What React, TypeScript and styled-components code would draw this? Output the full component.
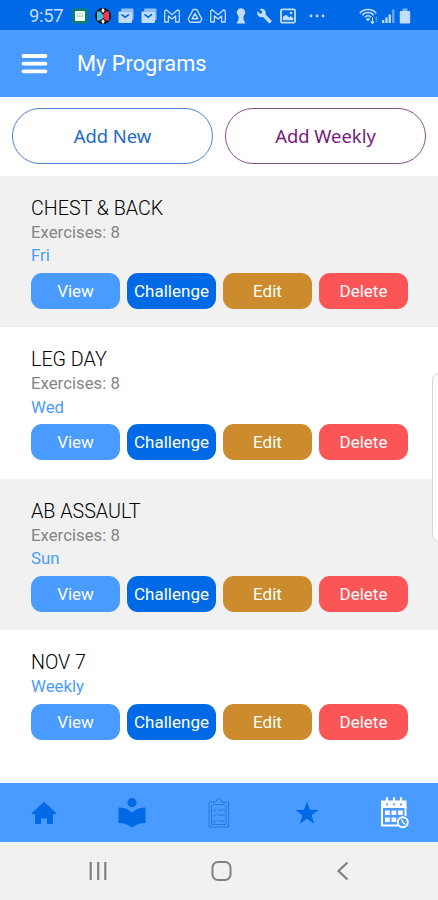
import React from 'react';
import styled, { createGlobalStyle } from 'styled-components';

const GlobalStyle = createGlobalStyle`
  *, *::before, *::after { box-sizing: border-box; }
  body { margin: 0; background: #fff; font-family: Roboto, "Liberation Sans", sans-serif; }
  button { font-family: inherit; border: 0; padding: 0; background: none; cursor: pointer; }
  svg { display: block; flex: none; }
`;

const Screen = styled.div`
  position: relative;
  display: flex;
  flex-direction: column;
  width: 438px;
  height: 900px;
  overflow: hidden;
  background: #fff;
`;

const StatusBar = styled.div`
  display: flex;
  align-items: center;
  height: 30px;
  padding: 2px 27px 0 29px;
  background: #006ae6;
  color: #c3dcfb;
`;

const Clock = styled.span`
  width: 43px;
  font-size: 18.5px;
  letter-spacing: -0.3px;
  line-height: 28px;
`;

const Notifications = styled.div`
  display: flex;
  flex: 1;
  gap: 7px;
`;

const SystemIcons = styled.div`
  display: flex;
  align-items: center;
  gap: 4px;
`;

const Header = styled.header`
  display: flex;
  align-items: center;
  height: 67px;
  padding: 0 22px 0 21px;
  gap: 29px;
  background: #4a9bff;
  color: #fff;
`;

const PageTitle = styled.h1`
  margin: 0;
  font-size: 21.8px;
  font-weight: 400;
  line-height: 66px;
`;

const AddRow = styled.div`
  display: flex;
  gap: 12px;
  height: 79px;
  padding: 11px 12px 12px;
`;

const AddButton = styled.button<{ $color: string; $border: string }>`
  flex: 1;
  border: 1px solid ${(p) => p.$border};
  border-radius: 28px;
  color: ${(p) => p.$color};
  font-family: "Noto Sans", sans-serif;
  font-size: 18.4px;
  line-height: 54px;
`;

const ProgramList = styled.main`
  display: flex;
  flex: 1;
  flex-direction: column;
`;

const Program = styled.section<{ $shaded: boolean; $last: boolean }>`
  height: ${(p) => (p.$last ? 'auto' : '151.4px')};
  flex: ${(p) => (p.$last ? '1' : 'none')};
  padding: 20px 30px 0 31px;
  background: ${(p) => (p.$shaded ? '#f1f1f1' : '#fff')};
`;

const ProgramName = styled.h2`
  margin: 0;
  font-size: 19.7px;
  font-weight: 300;
  line-height: 25px;
  color: #000;
`;

const Detail = styled.div<{ $color: string }>`
  font-size: 16.8px;
  line-height: 23.3px;
  color: ${(p) => p.$color};
`;

const Actions = styled.div`
  display: grid;
  grid-template-columns: repeat(4, 1fr);
  gap: 7px;
  margin-top: 5.4px;
`;

const ActionButton = styled.button<{ $bg: string }>`
  height: 36px;
  border-radius: 11px;
  background: ${(p) => p.$bg};
  color: #fff;
  font-size: 17px;
  line-height: 36px;
`;

const TabBar = styled.nav`
  display: grid;
  grid-template-columns: repeat(5, 1fr);
  height: 59px;
  background: #4a9bff;
`;

const Tab = styled.button<{ $active?: boolean }>`
  display: flex;
  align-items: center;
  justify-content: center;
  color: ${(p) => (p.$active ? '#fff' : '#006ae6')};
`;

const SystemNav = styled.div`
  display: flex;
  align-items: center;
  justify-content: space-between;
  height: 58px;
  padding: 0 86px 0 85px;
  background: #f1f1f1;
  color: #808080;
`;

const EdgeHandle = styled.div`
  position: absolute;
  top: 373px;
  right: -8px;
  width: 14px;
  height: 169px;
  border: 1.5px solid #d6d6d6;
  border-radius: 7px;
  background: #fdfdfd;
`;

const AgendaIcon = () => (
  <svg width="16" height="16" viewBox="0 0 16 16">
    <rect x="0.5" y="0.5" width="15" height="15" rx="3" fill="#0f8067" />
    <rect x="3" y="3" width="10" height="10" rx="1" fill="#eefbf5" />
    <path d="M5.5 5v3M8 5v3M10.5 5v3M5 8.5h6" stroke="#a9cdbf" strokeWidth="0.8" />
  </svg>
);

const ClipIcon = () => (
  <svg width="16" height="16" viewBox="0 0 16 16">
    <circle cx="8" cy="8" r="8" fill="#111" />
    <path d="M2 3.5h3.5L8 7v3l-2.5 2.5H2z" fill="#36c6d5" />
    <path d="M14 3.5h-3.5L8 7v3l2.5 2.5H14z" fill="#fa315b" />
    <path d="M8 0l1.8 2.5L8 5 6.2 2.5zM8 11l1.8 2.5L8 16l-1.8-2.5z" fill="#fff" />
  </svg>
);

const MailIcon = () => (
  <svg width="16" height="16" viewBox="0 0 16 16" fill="currentColor">
    <path d="M3.5 .5h11a1 1 0 0 1 1 1v10l-1.5 1V3.500H3z" opacity="0.75" />
    <path d="M1.500 3.500h11.500a1 1 0 0 1 1 1V14a1 1 0 0 1-1 1H1.500a1 1 0 0 1-1-1V4.500a1 1 0 0 1 1-1z" />
    <path d="M3.500 6.300L7.200 9.200l3.800-2.900" fill="none" stroke="#006ae6" strokeWidth="1.600" />
  </svg>
);

const GmailIcon = () => (
  <svg width="16" height="16" viewBox="0 0 16 16" fill="none" stroke="currentColor" strokeWidth="1.3" strokeLinejoin="round">
    <path d="M.7 3.8Q.7 2 2.5 2L8 6.7 13.5 2q1.8 0 1.8 1.8V14h-3.7V8L8 11 4.4 8v6H.7z" />
  </svg>
);

const DriveIcon = () => (
  <svg width="16" height="16" viewBox="0 0 16 16" fill="none" stroke="currentColor" strokeWidth="1.4" strokeLinejoin="round">
    <path d="M6.200 1.500h3.600L14.800 11l-1.700 3.200H2.900L1.200 11zM8 5.700l2.800 5H5.200z" />
  </svg>
);

const KeyholeIcon = () => (
  <svg width="16" height="16" viewBox="0 0 16 16" fill="currentColor">
    <circle cx="8" cy="4.500" r="4.200" />
    <path d="M5.500 7h5v4.500l2 4h-9l2-4z" />
  </svg>
);

const WrenchIcon = () => (
  <svg width="17" height="16" viewBox="0 0 24 24" fill="currentColor">
    <path d="M22.7 19l-9.1-9.1c.9-2.3.4-5-1.5-6.9-2-2-5-2.4-7.4-1.3L9 6 6 9 1.6 4.7C.4 7.1.9 10.1 2.9 12.1c1.900 1.900 4.600 2.400 6.900 1.500l9.100 9.100c.4.4 1 .4 1.400 0l2.300-2.300c.5-.4.5-1.100.1-1.400z" />
  </svg>
);

const PictureIcon = () => (
  <svg width="16" height="16" viewBox="0 0 16 16" fill="none" stroke="currentColor">
    <rect x="1" y="1.300" width="14" height="13.400" rx="1.500" strokeWidth="1.800" />
    <path d="M3 12V9l3-2 3 2.500 2-1 2 1.500v2z" fill="currentColor" strokeWidth="0.500" />
    <circle cx="11" cy="5" r="1.300" fill="currentColor" stroke="none" />
  </svg>
);

const MoreIcon = () => (
  <svg width="28" height="16" viewBox="0 0 28 16" fill="currentColor">
    <circle cx="8" cy="8" r="1.400" />
    <circle cx="14" cy="8" r="1.400" />
    <circle cx="20" cy="8" r="1.400" />
  </svg>
);

const WifiIcon = () => (
  <svg width="19" height="16" viewBox="0 0 19 16" fill="none" stroke="currentColor" strokeWidth="1.500">
    <path d="M.8 5.200C4.500.1 13.500.1 17.200 5.200M3.300 7.300C6 3.700 12 3.700 14.700 7.300M5.800 9.300c1.700-2 4.700-2 6.400 0" />
    <path d="M7 11q2-1.700 4 0l-2 2z" fill="currentColor" strokeWidth="0.500" />
    <path d="M13.500 9.500v6M11.800 13.500l1.700 2 1.500-2" strokeWidth="1.200" />
    <path d="M17.300 14V8.500" strokeWidth="1" opacity="0.500" />
  </svg>
);

const SignalIcon = () => (
  <svg width="13" height="16" viewBox="0 0 13 16" fill="currentColor">
    <path d="M0 12h2.300v3H0zM3.300 9.500h2.300V15H3.300zM6.600 6.500h2.300V15H6.600z" />
    <path d="M10 1.500h2.500V15H10z" opacity="0.500" />
  </svg>
);

const BatteryIcon = () => (
  <svg width="12" height="16" viewBox="0 0 12 16" fill="currentColor">
    <path d="M3.500.5h5V3h-5z" opacity="0.6" />
    <path d="M1.800 3h8.400a1 1 0 0 1 1 1v10.500a1 1 0 0 1-1 1H1.800a1 1 0 0 1-1-1V4a1 1 0 0 1 1-1z" />
  </svg>
);

const MenuIcon = () => (
  <svg width="27" height="22" viewBox="0 0 27 22" fill="none" stroke="currentColor" strokeWidth="3.800" strokeLinecap="round">
    <path d="M2.500 3h22M2.500 10.700h22M2.500 18.300h22" />
  </svg>
);

const HomeIcon = () => (
  <svg width="26" height="24" viewBox="0 0 26 24" fill="currentColor">
    <path d="M13 .8L25.200 12v1H22v8.500q0 1.500-1.500 1.500H16v-5.500h-6V23H5.500Q4 23 4 21.500V13H.8v-1z" />
  </svg>
);

const ReaderIcon = () => (
  <svg width="30" height="32" viewBox="-1 0 30 32" fill="currentColor">
    <circle cx="15" cy="5.700" r="4.600" />
    <path d="M1.500 10.500c5 0 9.500 1.300 13.500 5 4-3.700 8.500-5 13.500-5V26c-5 0-9.500 1.300-13.500 4.500-4-3.200-8.500-4.500-13.500-4.500z" />
  </svg>
);

const ChecklistIcon = () => (
  <svg width="22" height="33" viewBox="0 0 22 33" fill="none" stroke="#267cde" strokeWidth="1">
    <path d="M6 6H1v25h19.500V6h-5M3.500 9v19.500H18V9" />
    <path d="M5.500 8.500h10.500V6.300l-2.700-.8c-.3-4-4.800-4-5.100 0l-2.700.8z" />
    <path d="M4.800 14l1.200 1.500 2.500-3M4.800 19l1.200 1.500 2.500-3M4.800 25l1.200 1.500 2.500-3M10 14h7M10 19h7M10 25h7" />
  </svg>
);

const StarIcon = () => (
  <svg width="24" height="24" viewBox="0 0 24 24" fill="currentColor">
    <path d="M12 .5l2.900 8.200 8.700.2-6.900 5.300 2.500 8.500-7.200-5-7.200 5 2.500-8.500L.4 8.900l8.700-.2z" />
  </svg>
);

const CalendarIcon = () => (
  <svg width="29" height="33" viewBox="0 0 29 33" fill="none" stroke="currentColor">
    <path d="M7 2v6M14 2v6M21 2v6" strokeWidth="2.200" strokeLinecap="round" />
    <path d="M1 4.500h25.500V12H1z" fill="currentColor" stroke="none" />
    <path d="M2 10v19.500h17M25.500 10v10" strokeWidth="2" />
    <path d="M5 14.500h4.800V19H5zM11.500 14.500h4.800V19h-4.800zM18 14.500h4.800V19H18zM5 21.500h4.800V26H5zM11.500 21.500h4.800V26h-4.800z" fill="currentColor" stroke="none" />
    <path d="M6 8.300h2M13 8.300h2M20 8.300h2" stroke="#4a9bff" strokeWidth="1.700" />
    <circle cx="22.800" cy="26.300" r="5" fill="#4a9bff" strokeWidth="1.900" />
    <path d="M21.500 23.500l1.500 3 2.500 2" strokeWidth="1.300" />
  </svg>
);

const RecentsIcon = () => (
  <svg width="26" height="24" viewBox="0 0 26 24" fill="none" stroke="currentColor" strokeWidth="2.200">
    <path d="M5.700 3v18M13.200 3v18M20.300 3v18" />
  </svg>
);

const HomeKeyIcon = () => (
  <svg width="24" height="24" viewBox="1.500 0 24 24" fill="none" stroke="currentColor" strokeWidth="2">
    <rect x="3" y="3" width="18" height="18" rx="5.500" />
  </svg>
);

const BackIcon = () => (
  <svg width="18" height="24" viewBox="0 0 18 24" fill="none" stroke="currentColor" strokeWidth="2.200">
    <path d="M13.500 3.500L4.500 12l9 8.500" />
  </svg>
);

const programs = [
  { name: 'CHEST & BACK', exercises: 8, schedule: 'Fri' },
  { name: 'LEG DAY', exercises: 8, schedule: 'Wed' },
  { name: 'AB ASSAULT', exercises: 8, schedule: 'Sun' },
  { name: 'NOV 7', exercises: null, schedule: 'Weekly' },
];

const actions = [
  { label: 'View', color: '#4a9bff' },
  { label: 'Challenge', color: '#006ae6' },
  { label: 'Edit', color: '#cc8b2c' },
  { label: 'Delete', color: '#fc5558' },
];

export default function App() {
  return (
    <>
      <GlobalStyle />
      <Screen>
        <StatusBar>
          <Clock>9:57</Clock>
          <Notifications>
            <AgendaIcon />
            <ClipIcon />
            <MailIcon />
            <MailIcon />
            <GmailIcon />
            <DriveIcon />
            <GmailIcon />
            <KeyholeIcon />
            <WrenchIcon />
            <PictureIcon />
            <MoreIcon />
          </Notifications>
          <SystemIcons>
            <WifiIcon />
            <SignalIcon />
            <BatteryIcon />
          </SystemIcons>
        </StatusBar>
        <Header>
          <MenuIcon />
          <PageTitle>My Programs</PageTitle>
        </Header>
        <AddRow>
          <AddButton $color="#2268c8" $border="#4c83d0">Add New</AddButton>
          <AddButton $color="#75187c" $border="#8a4b91">Add Weekly</AddButton>
        </AddRow>
        <ProgramList>
          {programs.map((program, i) => (
            <Program key={program.name} $shaded={i % 2 === 0} $last={i === programs.length - 1}>
              <ProgramName>{program.name}</ProgramName>
              {program.exercises !== null && (
                <Detail $color="#858585">Exercises: {program.exercises}</Detail>
              )}
              <Detail $color="#4a9bff">{program.schedule}</Detail>
              <Actions>
                {actions.map((action) => (
                  <ActionButton key={action.label} $bg={action.color}>
                    {action.label}
                  </ActionButton>
                ))}
              </Actions>
            </Program>
          ))}
        </ProgramList>
        <TabBar>
          <Tab aria-label="Home"><HomeIcon /></Tab>
          <Tab aria-label="Library"><ReaderIcon /></Tab>
          <Tab aria-label="Checklist"><ChecklistIcon /></Tab>
          <Tab aria-label="Favorites"><StarIcon /></Tab>
          <Tab aria-label="Programs" $active><CalendarIcon /></Tab>
        </TabBar>
        <SystemNav>
          <RecentsIcon />
          <HomeKeyIcon />
          <BackIcon />
        </SystemNav>
        <EdgeHandle />
      </Screen>
    </>
  );
}
